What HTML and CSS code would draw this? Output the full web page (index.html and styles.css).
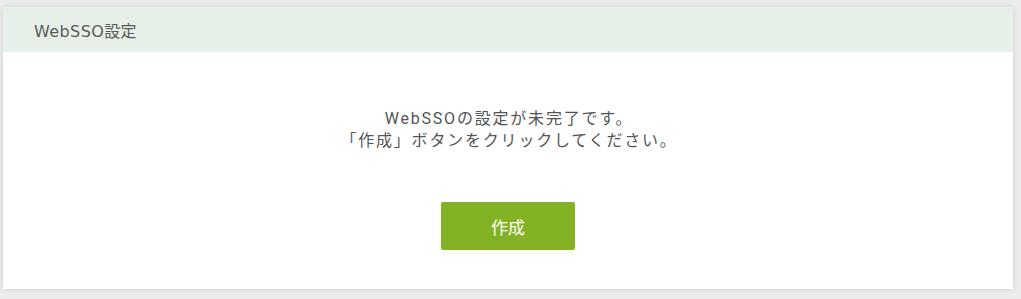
FILE: index.html
```html
<!DOCTYPE html>
<html lang="ja">
<head>
<meta charset="utf-8">
<link rel="stylesheet" href="styles.css">
</head>
<body>
<div class="card">
  <div class="card-header">WebSSO設定</div>
  <div class="card-body">
    <p class="message">WebSSOの設定が未完了です。<br>「作成」ボタンをクリックしてください。</p>
    <button class="btn-create" type="button">作成</button>
  </div>
</div>
</body>
</html>
```

FILE: styles.css
```css
html, body {
  margin: 0;
  padding: 0;
  background: #ececec;
}
body {
  padding: 7px 8px 10px 3px;
  font-family: "Noto Sans CJK JP", "Noto Sans", sans-serif;
  color: #555;
}
.card {
  background: #fff;
  width: 1010px;
  height: 282px;
  box-shadow: 0 0 6px rgba(0,0,0,0.12);
  display: flex;
  flex-direction: column;
}
.card-header {
  height: 45px;
  background: #e6f0e8;
  display: flex;
  align-items: center;
  padding-left: 31px;
  font-family: "DejaVu Sans", "Noto Sans CJK JP", sans-serif;
  font-size: 16px;
  letter-spacing: 0.4px;
  color: #5a5a5a;
}
.card-body {
  flex: 1;
  display: flex;
  flex-direction: column;
  align-items: center;
}
.message {
  margin: 56px 0 0 2px;
  font-family: Roboto, "Noto Sans CJK JP", sans-serif;
  font-size: 16px;
  letter-spacing: 1.8px;
  line-height: 22px;
  text-align: center;
  color: #555;
}
.btn-create {
  margin-top: 50px;
  width: 134px;
  height: 48px;
  border: none;
  border-radius: 2px;
  background: #84b225;
  color: #fff;
  font-family: "Noto Sans CJK JP", sans-serif;
  font-size: 17px;
  padding: 0;
}
```
